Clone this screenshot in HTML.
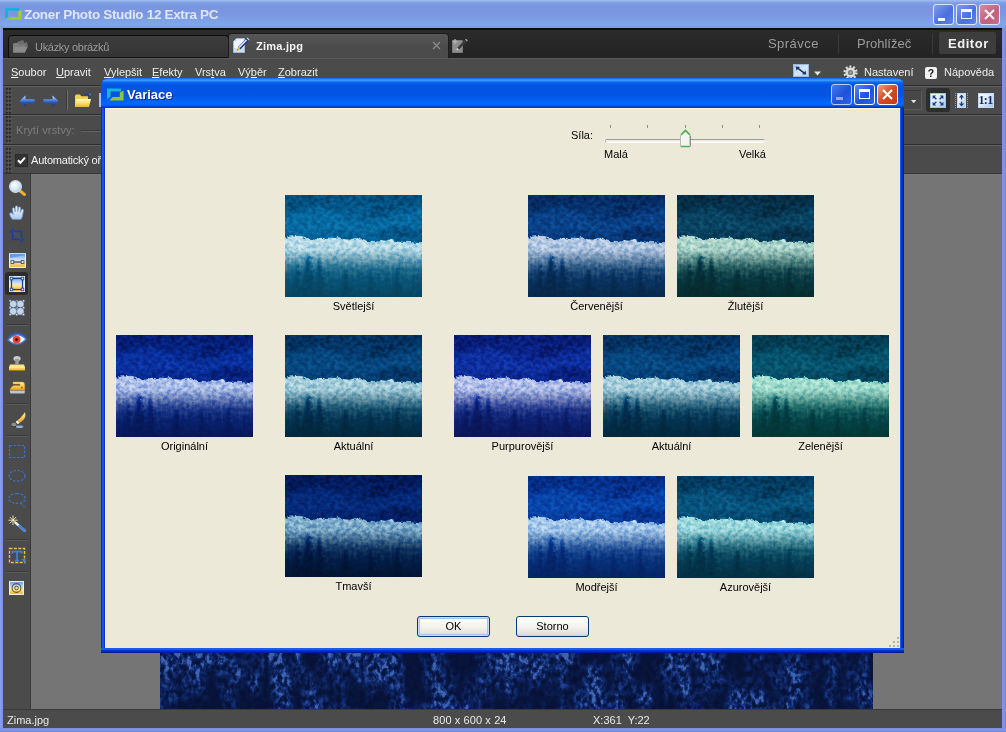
<!DOCTYPE html>
<html lang="cs"><head><meta charset="utf-8"><title>Zoner Photo Studio 12 Extra PC</title>
<style>
*{box-sizing:border-box;margin:0;padding:0}
html,body{width:1006px;height:732px;overflow:hidden}
body{position:relative;background:#7b92e2;font-family:"Liberation Sans",sans-serif;font-size:11px;color:#000;line-height:1}
.a{position:absolute}
.t{position:absolute;white-space:nowrap;line-height:13px;height:13px}
u{text-decoration:underline;text-underline-offset:1px}
/* main window */
#titlebar{left:0;top:0;width:1006px;height:28px;background:linear-gradient(#a0bbf2 0,#86a8ea 2px,#7a9ee4 3px,#7b96e0 6px,#7b96e0 14px,#7da2e8 21px,#7fa6ec 25px,#7b98ea 28px)}
#title{left:24px;top:7px;font-weight:bold;font-size:13.5px;line-height:16px;height:16px;color:#dde6fb;letter-spacing:-.33px}
.wb{position:absolute;top:4px;width:21px;height:21px;border-radius:3px;border:1px solid #dfe6fa}
#tabbar{left:3px;top:28px;width:999px;height:30px;background:linear-gradient(#0c0c0c 0,#0c0c0c 1.5px,#2b2b2b 2.5px,#232323 30px)}
.tab{position:absolute;top:6px;height:24px;border:1px solid #0c0c0c;border-bottom:none;border-radius:4px 4px 0 0}
#menubar{left:3px;top:58px;width:999px;height:28px;background:#4b4b4b;border-top:1px solid #585858}
.mi{position:absolute;top:66px;color:#ededed;white-space:nowrap;line-height:13px}
.tb{position:absolute;left:3px;width:999px;background:#4b4b4b;border-top:1px solid #2e2e2e;box-shadow:inset 0 1px 0 #606060}
.grip{position:absolute;left:6px}
#tools{left:3px;top:174px;width:28px;height:535px;background:#4b4b4b;border-right:1px solid #3a3a3a}
#canvas{left:31px;top:174px;width:971px;height:535px;background:#757575}
#status{left:3px;top:709px;width:999px;height:19px;background:#4b4b4b;border-top:1px solid #3a3a3a;color:#e6e6e6}
/* dialog */
#dlg{left:101px;top:78px;width:803px;height:575px;border-radius:8px 8px 0 0;background:#0a3ddc;overflow:hidden}
#dlgtitle{left:0;top:0;width:803px;height:30px;background:linear-gradient(#0a58dc 0,#2f86f8 1px,#3c96ff 2.5px,#0a6cf4 4px,#0358e6 6px,#0354e2 9px,#0355e3 17px,#0460f2 22px,#0468ff 26px,#0356ec 28px,#0038c8 29px,#0030b8 30px)}
#dlgbody{left:4px;top:30px;width:795px;height:540px;background:#ece9d8;border-top:1px solid #fbf6e6;border-left:1px solid #eef6fa}
.db{position:absolute;top:6px;width:21px;height:21px;border-radius:3px;border:1px solid #fff}
.lbl{position:absolute;width:137px;text-align:center;line-height:13px;height:13px;white-space:nowrap;color:#000}
.th{position:absolute;width:137px;height:102px;overflow:hidden}
.btn{position:absolute;top:616px;width:73px;height:21px;border:1px solid #003c74;border-radius:3px;background:linear-gradient(#fff 0,#f4f3ee 50%,#e6e4da 85%,#d6d0c5 100%);text-align:center;line-height:19px}
#root{position:absolute;left:0;top:0;width:1006px;height:732px;will-change:transform}

</style></head>
<body>
<div id="root">
<svg width="0" height="0" style="position:absolute;left:-10px;top:-10px" aria-hidden="true"><defs>

<linearGradient id="gTop" gradientUnits="userSpaceOnUse" x1="0" y1="0" x2="0" y2="44">
 <stop offset="0" stop-color="rgb(26,212,0)"/><stop offset=".5" stop-color="rgb(42,212,0)"/><stop offset="1" stop-color="rgb(46,212,0)"/>
</linearGradient>
<linearGradient id="gBand" gradientUnits="userSpaceOnUse" x1="0" y1="40" x2="0" y2="102">
 <stop offset="0" stop-color="rgb(196,225,0)"/>
 <stop offset=".14" stop-color="rgb(186,230,20)"/>
 <stop offset=".3" stop-color="rgb(174,235,90)"/>
 <stop offset=".48" stop-color="rgb(134,220,170)"/>
 <stop offset=".68" stop-color="rgb(74,190,200)"/>
 <stop offset="1" stop-color="rgb(42,160,190)"/>
</linearGradient>

<filter id="soft1" x="-30%" y="-10%" width="160%" height="120%"><feGaussianBlur stdDeviation="1.3"/></filter>
<filter id="soft" x="-10%" y="-20%" width="120%" height="140%"><feGaussianBlur stdDeviation="2.2"/></filter>
<symbol id="forest" viewBox="0 0 137 102" preserveAspectRatio="none" overflow="visible">
 <rect x="-10" y="-10" width="157" height="122" fill="url(#gTop)"/>
 <g filter="url(#soft)">
 <path d="M-10,-10 L66,-10 L50,8 L30,11 L12,17 L-10,19Z" fill="rgb(20,212,0)"/>
 <path d="M70,-10 L147,-10 L147,4 L116,10 L98,22 L84,21 L88,10Z" fill="rgb(22,212,0)"/>
 <path d="M-10,22 L20,15 L44,15 L62,23 L86,27 L108,22 L147,13 L147,33 L110,40 L80,39 L50,37 L20,41 L-10,40Z" fill="rgb(62,212,0)"/>
 <path d="M92,36 L114,31 L147,36 L147,50 L96,48Z" fill="rgb(26,212,0)"/>
 </g>
 <path d="M-10,44 Q-2,41.5 2,42.5 Q6,40 10,41.5 Q14,40 18,41.5 Q22,42.5 25,43.5 Q28,45 32,44 Q36,42 40,43.5 Q45,42 50,43 Q54,41.5 58,43.5 Q63,45 67,44 Q72,42.5 76,44.5 Q80,46 84,46 Q88,47.5 92,46.5 Q96,44.5 100,45.5 Q105,43.5 109,45.5 Q114,47.5 118,46.5 Q123,45 127,47 Q132,48.5 147,48 L147,115 L-10,115Z" fill="url(#gBand)"/>
 <g filter="url(#soft1)" fill="rgb(30,150,120)">
  <path d="M23,58 L28,80 L31,115 L15,115 L19,80Z"/>
  <path d="M34,62 L38,84 L41,115 L28,115 L31,84Z"/>
  <path d="M12,66 L15,88 L17,115 L6,115 L9,88Z"/>
  <path d="M60,72 L64,92 L66,115 L54,115 L57,92Z"/>
  <path d="M86,74 L90,94 L92,115 L80,115 L83,94Z"/>
  <path d="M112,70 L116,92 L118,115 L106,115 L109,92Z"/>
 </g>
</symbol>

<filter id="f-orig" x="0" y="0" width="100%" height="100%" color-interpolation-filters="sRGB">
 <feTurbulence type="fractalNoise" baseFrequency="0.22 0.26" numOctaves="3" seed="7" result="tn1"/>
 <feColorMatrix in="tn1" type="matrix" values="2.4 0 0 0 -0.7  2.4 0 0 0 -0.7  2.4 0 0 0 -0.7  0 0 0 0 1" result="n1"/>
 <feTurbulence type="fractalNoise" baseFrequency="0.42 0.04" numOctaves="2" seed="3" result="tn2"/>
 <feColorMatrix in="tn2" type="matrix" values="0 2.6 0 0 -0.8  0 2.6 0 0 -0.8  0 2.6 0 0 -0.8  0 0 0 0 1" result="n2"/>
 <feDisplacementMap in="SourceGraphic" in2="tn1" scale="5" xChannelSelector="R" yChannelSelector="G" result="src"/>
 <feColorMatrix in="src" type="matrix" values="1 0 0 0 0  1 0 0 0 0  1 0 0 0 0  0 0 0 0 1" result="sR"/>
 <feColorMatrix in="src" type="matrix" values="0 1 0 0 0  0 1 0 0 0  0 1 0 0 0  0 0 0 0 1" result="sG"/>
 <feColorMatrix in="src" type="matrix" values="0 0 1 0 0  0 0 1 0 0  0 0 1 0 0  0 0 0 0 1" result="sB"/>
 <feComposite in="sG" in2="n1" operator="arithmetic" k1="1" k2="0" k3="0" k4="0" result="t1"/>
 <feComposite in="sB" in2="n2" operator="arithmetic" k1="1" k2="0" k3="0" k4="0" result="t2"/>
 <feComposite in="sR" in2="t1" operator="arithmetic" k1="0" k2="1" k3="0.22" k4="0" result="s1"/>
 <feComposite in="s1" in2="t2" operator="arithmetic" k1="0" k2="1" k3="0.12" k4="0" result="s2"/>
 <feComponentTransfer in="s2">
  <feFuncR type="table" tableValues="0.008 0.020 0.047 0.259 0.620 0.910"/>
  <feFuncG type="table" tableValues="0.039 0.125 0.227 0.408 0.706 0.933"/>
  <feFuncB type="table" tableValues="0.220 0.486 0.690 0.800 0.894 0.980"/>
 </feComponentTransfer>
</filter>
<linearGradient id="gT-orig" gradientUnits="userSpaceOnUse" x1="0" y1="54" x2="0" y2="102"><stop offset="0" stop-color="rgb(7,22,76)" stop-opacity="0"/><stop offset=".4" stop-color="rgb(7,22,76)" stop-opacity=".5"/><stop offset="1" stop-color="rgb(7,22,76)" stop-opacity=".82"/></linearGradient>
<filter id="f-akt" x="0" y="0" width="100%" height="100%" color-interpolation-filters="sRGB">
 <feTurbulence type="fractalNoise" baseFrequency="0.22 0.26" numOctaves="3" seed="7" result="tn1"/>
 <feColorMatrix in="tn1" type="matrix" values="2.4 0 0 0 -0.7  2.4 0 0 0 -0.7  2.4 0 0 0 -0.7  0 0 0 0 1" result="n1"/>
 <feTurbulence type="fractalNoise" baseFrequency="0.42 0.04" numOctaves="2" seed="3" result="tn2"/>
 <feColorMatrix in="tn2" type="matrix" values="0 2.6 0 0 -0.8  0 2.6 0 0 -0.8  0 2.6 0 0 -0.8  0 0 0 0 1" result="n2"/>
 <feDisplacementMap in="SourceGraphic" in2="tn1" scale="5" xChannelSelector="R" yChannelSelector="G" result="src"/>
 <feColorMatrix in="src" type="matrix" values="1 0 0 0 0  1 0 0 0 0  1 0 0 0 0  0 0 0 0 1" result="sR"/>
 <feColorMatrix in="src" type="matrix" values="0 1 0 0 0  0 1 0 0 0  0 1 0 0 0  0 0 0 0 1" result="sG"/>
 <feColorMatrix in="src" type="matrix" values="0 0 1 0 0  0 0 1 0 0  0 0 1 0 0  0 0 0 0 1" result="sB"/>
 <feComposite in="sG" in2="n1" operator="arithmetic" k1="1" k2="0" k3="0" k4="0" result="t1"/>
 <feComposite in="sB" in2="n2" operator="arithmetic" k1="1" k2="0" k3="0" k4="0" result="t2"/>
 <feComposite in="sR" in2="t1" operator="arithmetic" k1="0" k2="1" k3="0.22" k4="0" result="s1"/>
 <feComposite in="s1" in2="t2" operator="arithmetic" k1="0" k2="1" k3="0.12" k4="0" result="s2"/>
 <feComponentTransfer in="s2">
  <feFuncR type="table" tableValues="0.008 0.016 0.031 0.227 0.588 0.886"/>
  <feFuncG type="table" tableValues="0.086 0.204 0.322 0.541 0.769 0.941"/>
  <feFuncB type="table" tableValues="0.173 0.400 0.557 0.690 0.831 0.949"/>
 </feComponentTransfer>
</filter>
<linearGradient id="gT-akt" gradientUnits="userSpaceOnUse" x1="0" y1="54" x2="0" y2="102"><stop offset="0" stop-color="rgb(3,36,50)" stop-opacity="0"/><stop offset=".4" stop-color="rgb(3,36,50)" stop-opacity=".5"/><stop offset="1" stop-color="rgb(3,36,50)" stop-opacity=".82"/></linearGradient>
<filter id="f-svet" x="0" y="0" width="100%" height="100%" color-interpolation-filters="sRGB">
 <feTurbulence type="fractalNoise" baseFrequency="0.22 0.26" numOctaves="3" seed="7" result="tn1"/>
 <feColorMatrix in="tn1" type="matrix" values="2.4 0 0 0 -0.7  2.4 0 0 0 -0.7  2.4 0 0 0 -0.7  0 0 0 0 1" result="n1"/>
 <feTurbulence type="fractalNoise" baseFrequency="0.42 0.04" numOctaves="2" seed="3" result="tn2"/>
 <feColorMatrix in="tn2" type="matrix" values="0 2.6 0 0 -0.8  0 2.6 0 0 -0.8  0 2.6 0 0 -0.8  0 0 0 0 1" result="n2"/>
 <feDisplacementMap in="SourceGraphic" in2="tn1" scale="5" xChannelSelector="R" yChannelSelector="G" result="src"/>
 <feColorMatrix in="src" type="matrix" values="1 0 0 0 0  1 0 0 0 0  1 0 0 0 0  0 0 0 0 1" result="sR"/>
 <feColorMatrix in="src" type="matrix" values="0 1 0 0 0  0 1 0 0 0  0 1 0 0 0  0 0 0 0 1" result="sG"/>
 <feColorMatrix in="src" type="matrix" values="0 0 1 0 0  0 0 1 0 0  0 0 1 0 0  0 0 0 0 1" result="sB"/>
 <feComposite in="sG" in2="n1" operator="arithmetic" k1="1" k2="0" k3="0" k4="0" result="t1"/>
 <feComposite in="sB" in2="n2" operator="arithmetic" k1="1" k2="0" k3="0" k4="0" result="t2"/>
 <feComposite in="sR" in2="t1" operator="arithmetic" k1="0" k2="1" k3="0.22" k4="0" result="s1"/>
 <feComposite in="s1" in2="t2" operator="arithmetic" k1="0" k2="1" k3="0.12" k4="0" result="s2"/>
 <feComponentTransfer in="s2">
  <feFuncR type="table" tableValues="0.008 0.012 0.031 0.275 0.667 0.925"/>
  <feFuncG type="table" tableValues="0.173 0.329 0.463 0.627 0.831 0.965"/>
  <feFuncB type="table" tableValues="0.282 0.525 0.690 0.784 0.886 0.965"/>
 </feComponentTransfer>
</filter>
<linearGradient id="gT-svet" gradientUnits="userSpaceOnUse" x1="0" y1="54" x2="0" y2="102"><stop offset="0" stop-color="rgb(8,64,86)" stop-opacity="0"/><stop offset=".4" stop-color="rgb(8,64,86)" stop-opacity=".5"/><stop offset="1" stop-color="rgb(8,64,86)" stop-opacity=".82"/></linearGradient>
<filter id="f-tmav" x="0" y="0" width="100%" height="100%" color-interpolation-filters="sRGB">
 <feTurbulence type="fractalNoise" baseFrequency="0.22 0.26" numOctaves="3" seed="7" result="tn1"/>
 <feColorMatrix in="tn1" type="matrix" values="2.4 0 0 0 -0.7  2.4 0 0 0 -0.7  2.4 0 0 0 -0.7  0 0 0 0 1" result="n1"/>
 <feTurbulence type="fractalNoise" baseFrequency="0.42 0.04" numOctaves="2" seed="3" result="tn2"/>
 <feColorMatrix in="tn2" type="matrix" values="0 2.6 0 0 -0.8  0 2.6 0 0 -0.8  0 2.6 0 0 -0.8  0 0 0 0 1" result="n2"/>
 <feDisplacementMap in="SourceGraphic" in2="tn1" scale="5" xChannelSelector="R" yChannelSelector="G" result="src"/>
 <feColorMatrix in="src" type="matrix" values="1 0 0 0 0  1 0 0 0 0  1 0 0 0 0  0 0 0 0 1" result="sR"/>
 <feColorMatrix in="src" type="matrix" values="0 1 0 0 0  0 1 0 0 0  0 1 0 0 0  0 0 0 0 1" result="sG"/>
 <feColorMatrix in="src" type="matrix" values="0 0 1 0 0  0 0 1 0 0  0 0 1 0 0  0 0 0 0 1" result="sB"/>
 <feComposite in="sG" in2="n1" operator="arithmetic" k1="1" k2="0" k3="0" k4="0" result="t1"/>
 <feComposite in="sB" in2="n2" operator="arithmetic" k1="1" k2="0" k3="0" k4="0" result="t2"/>
 <feComposite in="sR" in2="t1" operator="arithmetic" k1="0" k2="1" k3="0.22" k4="0" result="s1"/>
 <feComposite in="s1" in2="t2" operator="arithmetic" k1="0" k2="1" k3="0.12" k4="0" result="s2"/>
 <feComponentTransfer in="s2">
  <feFuncR type="table" tableValues="0.004 0.012 0.024 0.141 0.431 0.765"/>
  <feFuncG type="table" tableValues="0.039 0.110 0.196 0.361 0.627 0.871"/>
  <feFuncB type="table" tableValues="0.141 0.376 0.533 0.627 0.765 0.910"/>
 </feComponentTransfer>
</filter>
<linearGradient id="gT-tmav" gradientUnits="userSpaceOnUse" x1="0" y1="54" x2="0" y2="102"><stop offset="0" stop-color="rgb(2,18,36)" stop-opacity="0"/><stop offset=".4" stop-color="rgb(2,18,36)" stop-opacity=".5"/><stop offset="1" stop-color="rgb(2,18,36)" stop-opacity=".82"/></linearGradient>
<filter id="f-cerv" x="0" y="0" width="100%" height="100%" color-interpolation-filters="sRGB">
 <feTurbulence type="fractalNoise" baseFrequency="0.22 0.26" numOctaves="3" seed="7" result="tn1"/>
 <feColorMatrix in="tn1" type="matrix" values="2.4 0 0 0 -0.7  2.4 0 0 0 -0.7  2.4 0 0 0 -0.7  0 0 0 0 1" result="n1"/>
 <feTurbulence type="fractalNoise" baseFrequency="0.42 0.04" numOctaves="2" seed="3" result="tn2"/>
 <feColorMatrix in="tn2" type="matrix" values="0 2.6 0 0 -0.8  0 2.6 0 0 -0.8  0 2.6 0 0 -0.8  0 0 0 0 1" result="n2"/>
 <feDisplacementMap in="SourceGraphic" in2="tn1" scale="5" xChannelSelector="R" yChannelSelector="G" result="src"/>
 <feColorMatrix in="src" type="matrix" values="1 0 0 0 0  1 0 0 0 0  1 0 0 0 0  0 0 0 0 1" result="sR"/>
 <feColorMatrix in="src" type="matrix" values="0 1 0 0 0  0 1 0 0 0  0 1 0 0 0  0 0 0 0 1" result="sG"/>
 <feColorMatrix in="src" type="matrix" values="0 0 1 0 0  0 0 1 0 0  0 0 1 0 0  0 0 0 0 1" result="sB"/>
 <feComposite in="sG" in2="n1" operator="arithmetic" k1="1" k2="0" k3="0" k4="0" result="t1"/>
 <feComposite in="sB" in2="n2" operator="arithmetic" k1="1" k2="0" k3="0" k4="0" result="t2"/>
 <feComposite in="sR" in2="t1" operator="arithmetic" k1="0" k2="1" k3="0.22" k4="0" result="s1"/>
 <feComposite in="s1" in2="t2" operator="arithmetic" k1="0" k2="1" k3="0.12" k4="0" result="s2"/>
 <feComponentTransfer in="s2">
  <feFuncR type="table" tableValues="0.012 0.024 0.043 0.306 0.647 0.925"/>
  <feFuncG type="table" tableValues="0.086 0.184 0.298 0.525 0.745 0.933"/>
  <feFuncB type="table" tableValues="0.188 0.416 0.596 0.753 0.863 0.957"/>
 </feComponentTransfer>
</filter>
<linearGradient id="gT-cerv" gradientUnits="userSpaceOnUse" x1="0" y1="54" x2="0" y2="102"><stop offset="0" stop-color="rgb(8,38,66)" stop-opacity="0"/><stop offset=".4" stop-color="rgb(8,38,66)" stop-opacity=".5"/><stop offset="1" stop-color="rgb(8,38,66)" stop-opacity=".82"/></linearGradient>
<filter id="f-zlut" x="0" y="0" width="100%" height="100%" color-interpolation-filters="sRGB">
 <feTurbulence type="fractalNoise" baseFrequency="0.22 0.26" numOctaves="3" seed="7" result="tn1"/>
 <feColorMatrix in="tn1" type="matrix" values="2.4 0 0 0 -0.7  2.4 0 0 0 -0.7  2.4 0 0 0 -0.7  0 0 0 0 1" result="n1"/>
 <feTurbulence type="fractalNoise" baseFrequency="0.42 0.04" numOctaves="2" seed="3" result="tn2"/>
 <feColorMatrix in="tn2" type="matrix" values="0 2.6 0 0 -0.8  0 2.6 0 0 -0.8  0 2.6 0 0 -0.8  0 0 0 0 1" result="n2"/>
 <feDisplacementMap in="SourceGraphic" in2="tn1" scale="5" xChannelSelector="R" yChannelSelector="G" result="src"/>
 <feColorMatrix in="src" type="matrix" values="1 0 0 0 0  1 0 0 0 0  1 0 0 0 0  0 0 0 0 1" result="sR"/>
 <feColorMatrix in="src" type="matrix" values="0 1 0 0 0  0 1 0 0 0  0 1 0 0 0  0 0 0 0 1" result="sG"/>
 <feColorMatrix in="src" type="matrix" values="0 0 1 0 0  0 0 1 0 0  0 0 1 0 0  0 0 0 0 1" result="sB"/>
 <feComposite in="sG" in2="n1" operator="arithmetic" k1="1" k2="0" k3="0" k4="0" result="t1"/>
 <feComposite in="sB" in2="n2" operator="arithmetic" k1="1" k2="0" k3="0" k4="0" result="t2"/>
 <feComposite in="sR" in2="t1" operator="arithmetic" k1="0" k2="1" k3="0.22" k4="0" result="s1"/>
 <feComposite in="s1" in2="t2" operator="arithmetic" k1="0" k2="1" k3="0.12" k4="0" result="s2"/>
 <feComponentTransfer in="s2">
  <feFuncR type="table" tableValues="0.012 0.024 0.043 0.275 0.627 0.894"/>
  <feFuncG type="table" tableValues="0.094 0.192 0.306 0.549 0.804 0.957"/>
  <feFuncB type="table" tableValues="0.133 0.298 0.431 0.588 0.765 0.910"/>
 </feComponentTransfer>
</filter>
<linearGradient id="gT-zlut" gradientUnits="userSpaceOnUse" x1="0" y1="54" x2="0" y2="102"><stop offset="0" stop-color="rgb(6,42,38)" stop-opacity="0"/><stop offset=".4" stop-color="rgb(6,42,38)" stop-opacity=".5"/><stop offset="1" stop-color="rgb(6,42,38)" stop-opacity=".82"/></linearGradient>
<filter id="f-purp" x="0" y="0" width="100%" height="100%" color-interpolation-filters="sRGB">
 <feTurbulence type="fractalNoise" baseFrequency="0.22 0.26" numOctaves="3" seed="7" result="tn1"/>
 <feColorMatrix in="tn1" type="matrix" values="2.4 0 0 0 -0.7  2.4 0 0 0 -0.7  2.4 0 0 0 -0.7  0 0 0 0 1" result="n1"/>
 <feTurbulence type="fractalNoise" baseFrequency="0.42 0.04" numOctaves="2" seed="3" result="tn2"/>
 <feColorMatrix in="tn2" type="matrix" values="0 2.6 0 0 -0.8  0 2.6 0 0 -0.8  0 2.6 0 0 -0.8  0 0 0 0 1" result="n2"/>
 <feDisplacementMap in="SourceGraphic" in2="tn1" scale="5" xChannelSelector="R" yChannelSelector="G" result="src"/>
 <feColorMatrix in="src" type="matrix" values="1 0 0 0 0  1 0 0 0 0  1 0 0 0 0  0 0 0 0 1" result="sR"/>
 <feColorMatrix in="src" type="matrix" values="0 1 0 0 0  0 1 0 0 0  0 1 0 0 0  0 0 0 0 1" result="sG"/>
 <feColorMatrix in="src" type="matrix" values="0 0 1 0 0  0 0 1 0 0  0 0 1 0 0  0 0 0 0 1" result="sB"/>
 <feComposite in="sG" in2="n1" operator="arithmetic" k1="1" k2="0" k3="0" k4="0" result="t1"/>
 <feComposite in="sB" in2="n2" operator="arithmetic" k1="1" k2="0" k3="0" k4="0" result="t2"/>
 <feComposite in="sR" in2="t1" operator="arithmetic" k1="0" k2="1" k3="0.22" k4="0" result="s1"/>
 <feComposite in="s1" in2="t2" operator="arithmetic" k1="0" k2="1" k3="0.12" k4="0" result="s2"/>
 <feComponentTransfer in="s2">
  <feFuncR type="table" tableValues="0.016 0.031 0.067 0.290 0.643 0.925"/>
  <feFuncG type="table" tableValues="0.039 0.118 0.220 0.408 0.706 0.925"/>
  <feFuncB type="table" tableValues="0.220 0.486 0.698 0.808 0.894 0.980"/>
 </feComponentTransfer>
</filter>
<linearGradient id="gT-purp" gradientUnits="userSpaceOnUse" x1="0" y1="54" x2="0" y2="102"><stop offset="0" stop-color="rgb(11,20,78)" stop-opacity="0"/><stop offset=".4" stop-color="rgb(11,20,78)" stop-opacity=".5"/><stop offset="1" stop-color="rgb(11,20,78)" stop-opacity=".82"/></linearGradient>
<filter id="f-zel" x="0" y="0" width="100%" height="100%" color-interpolation-filters="sRGB">
 <feTurbulence type="fractalNoise" baseFrequency="0.22 0.26" numOctaves="3" seed="7" result="tn1"/>
 <feColorMatrix in="tn1" type="matrix" values="2.4 0 0 0 -0.7  2.4 0 0 0 -0.7  2.4 0 0 0 -0.7  0 0 0 0 1" result="n1"/>
 <feTurbulence type="fractalNoise" baseFrequency="0.42 0.04" numOctaves="2" seed="3" result="tn2"/>
 <feColorMatrix in="tn2" type="matrix" values="0 2.6 0 0 -0.8  0 2.6 0 0 -0.8  0 2.6 0 0 -0.8  0 0 0 0 1" result="n2"/>
 <feDisplacementMap in="SourceGraphic" in2="tn1" scale="5" xChannelSelector="R" yChannelSelector="G" result="src"/>
 <feColorMatrix in="src" type="matrix" values="1 0 0 0 0  1 0 0 0 0  1 0 0 0 0  0 0 0 0 1" result="sR"/>
 <feColorMatrix in="src" type="matrix" values="0 1 0 0 0  0 1 0 0 0  0 1 0 0 0  0 0 0 0 1" result="sG"/>
 <feColorMatrix in="src" type="matrix" values="0 0 1 0 0  0 0 1 0 0  0 0 1 0 0  0 0 0 0 1" result="sB"/>
 <feComposite in="sG" in2="n1" operator="arithmetic" k1="1" k2="0" k3="0" k4="0" result="t1"/>
 <feComposite in="sB" in2="n2" operator="arithmetic" k1="1" k2="0" k3="0" k4="0" result="t2"/>
 <feComposite in="sR" in2="t1" operator="arithmetic" k1="0" k2="1" k3="0.22" k4="0" result="s1"/>
 <feComposite in="s1" in2="t2" operator="arithmetic" k1="0" k2="1" k3="0.12" k4="0" result="s2"/>
 <feComponentTransfer in="s2">
  <feFuncR type="table" tableValues="0.008 0.016 0.031 0.235 0.588 0.843"/>
  <feFuncG type="table" tableValues="0.125 0.247 0.373 0.627 0.843 0.965"/>
  <feFuncB type="table" tableValues="0.149 0.341 0.482 0.627 0.784 0.910"/>
 </feComponentTransfer>
</filter>
<linearGradient id="gT-zel" gradientUnits="userSpaceOnUse" x1="0" y1="54" x2="0" y2="102"><stop offset="0" stop-color="rgb(3,52,44)" stop-opacity="0"/><stop offset=".4" stop-color="rgb(3,52,44)" stop-opacity=".5"/><stop offset="1" stop-color="rgb(3,52,44)" stop-opacity=".82"/></linearGradient>
<filter id="f-modr" x="0" y="0" width="100%" height="100%" color-interpolation-filters="sRGB">
 <feTurbulence type="fractalNoise" baseFrequency="0.22 0.26" numOctaves="3" seed="7" result="tn1"/>
 <feColorMatrix in="tn1" type="matrix" values="2.4 0 0 0 -0.7  2.4 0 0 0 -0.7  2.4 0 0 0 -0.7  0 0 0 0 1" result="n1"/>
 <feTurbulence type="fractalNoise" baseFrequency="0.42 0.04" numOctaves="2" seed="3" result="tn2"/>
 <feColorMatrix in="tn2" type="matrix" values="0 2.6 0 0 -0.8  0 2.6 0 0 -0.8  0 2.6 0 0 -0.8  0 0 0 0 1" result="n2"/>
 <feDisplacementMap in="SourceGraphic" in2="tn1" scale="5" xChannelSelector="R" yChannelSelector="G" result="src"/>
 <feColorMatrix in="src" type="matrix" values="1 0 0 0 0  1 0 0 0 0  1 0 0 0 0  0 0 0 0 1" result="sR"/>
 <feColorMatrix in="src" type="matrix" values="0 1 0 0 0  0 1 0 0 0  0 1 0 0 0  0 0 0 0 1" result="sG"/>
 <feColorMatrix in="src" type="matrix" values="0 0 1 0 0  0 0 1 0 0  0 0 1 0 0  0 0 0 0 1" result="sB"/>
 <feComposite in="sG" in2="n1" operator="arithmetic" k1="1" k2="0" k3="0" k4="0" result="t1"/>
 <feComposite in="sB" in2="n2" operator="arithmetic" k1="1" k2="0" k3="0" k4="0" result="t2"/>
 <feComposite in="sR" in2="t1" operator="arithmetic" k1="0" k2="1" k3="0.22" k4="0" result="s1"/>
 <feComposite in="s1" in2="t2" operator="arithmetic" k1="0" k2="1" k3="0.12" k4="0" result="s2"/>
 <feComponentTransfer in="s2">
  <feFuncR type="table" tableValues="0.008 0.020 0.039 0.243 0.588 0.886"/>
  <feFuncG type="table" tableValues="0.078 0.188 0.314 0.494 0.745 0.941"/>
  <feFuncB type="table" tableValues="0.275 0.557 0.722 0.824 0.902 0.973"/>
 </feComponentTransfer>
</filter>
<linearGradient id="gT-modr" gradientUnits="userSpaceOnUse" x1="0" y1="54" x2="0" y2="102"><stop offset="0" stop-color="rgb(6,32,88)" stop-opacity="0"/><stop offset=".4" stop-color="rgb(6,32,88)" stop-opacity=".5"/><stop offset="1" stop-color="rgb(6,32,88)" stop-opacity=".82"/></linearGradient>
<filter id="f-azur" x="0" y="0" width="100%" height="100%" color-interpolation-filters="sRGB">
 <feTurbulence type="fractalNoise" baseFrequency="0.22 0.26" numOctaves="3" seed="7" result="tn1"/>
 <feColorMatrix in="tn1" type="matrix" values="2.4 0 0 0 -0.7  2.4 0 0 0 -0.7  2.4 0 0 0 -0.7  0 0 0 0 1" result="n1"/>
 <feTurbulence type="fractalNoise" baseFrequency="0.42 0.04" numOctaves="2" seed="3" result="tn2"/>
 <feColorMatrix in="tn2" type="matrix" values="0 2.6 0 0 -0.8  0 2.6 0 0 -0.8  0 2.6 0 0 -0.8  0 0 0 0 1" result="n2"/>
 <feDisplacementMap in="SourceGraphic" in2="tn1" scale="5" xChannelSelector="R" yChannelSelector="G" result="src"/>
 <feColorMatrix in="src" type="matrix" values="1 0 0 0 0  1 0 0 0 0  1 0 0 0 0  0 0 0 0 1" result="sR"/>
 <feColorMatrix in="src" type="matrix" values="0 1 0 0 0  0 1 0 0 0  0 1 0 0 0  0 0 0 0 1" result="sG"/>
 <feColorMatrix in="src" type="matrix" values="0 0 1 0 0  0 0 1 0 0  0 0 1 0 0  0 0 0 0 1" result="sB"/>
 <feComposite in="sG" in2="n1" operator="arithmetic" k1="1" k2="0" k3="0" k4="0" result="t1"/>
 <feComposite in="sB" in2="n2" operator="arithmetic" k1="1" k2="0" k3="0" k4="0" result="t2"/>
 <feComposite in="sR" in2="t1" operator="arithmetic" k1="0" k2="1" k3="0.22" k4="0" result="s1"/>
 <feComposite in="s1" in2="t2" operator="arithmetic" k1="0" k2="1" k3="0.12" k4="0" result="s2"/>
 <feComponentTransfer in="s2">
  <feFuncR type="table" tableValues="0.008 0.016 0.035 0.220 0.549 0.843"/>
  <feFuncG type="table" tableValues="0.110 0.243 0.369 0.588 0.816 0.961"/>
  <feFuncB type="table" tableValues="0.196 0.392 0.541 0.686 0.839 0.949"/>
 </feComponentTransfer>
</filter>
<linearGradient id="gT-azur" gradientUnits="userSpaceOnUse" x1="0" y1="54" x2="0" y2="102"><stop offset="0" stop-color="rgb(3,44,58)" stop-opacity="0"/><stop offset=".4" stop-color="rgb(3,44,58)" stop-opacity=".5"/><stop offset="1" stop-color="rgb(3,44,58)" stop-opacity=".82"/></linearGradient>

<symbol id="bigforest" viewBox="0 0 713 68" preserveAspectRatio="none">
 <rect width="713" height="68" fill="rgb(20,235,0)"/>
</symbol>
<filter id="f-bigp" x="0" y="0" width="100%" height="100%" color-interpolation-filters="sRGB">
 <feTurbulence type="fractalNoise" baseFrequency="0.045 0.022" numOctaves="2" seed="5" result="ta"/>
 <feColorMatrix in="ta" type="matrix" values="3.2 0 0 0 -1.1  3.2 0 0 0 -1.1  3.2 0 0 0 -1.1  0 0 0 0 1" result="na"/>
 <feTurbulence type="fractalNoise" baseFrequency="0.22 0.16" numOctaves="3" seed="11" result="tb"/>
 <feColorMatrix in="tb" type="matrix" values="0 2.6 0 0 -0.85  0 2.6 0 0 -0.85  0 2.6 0 0 -0.85  0 0 0 0 1" result="nb"/>
 <feComposite in="na" in2="nb" operator="arithmetic" k1="0.9" k2="0.06" k3="0.1" k4="0.07" result="n1"/>
 <feComponentTransfer in="n1">
  <feFuncR type="table" tableValues="0.024 0.035 0.047 0.071 0.125 0.251"/>
  <feFuncG type="table" tableValues="0.059 0.090 0.125 0.180 0.259 0.392"/>
  <feFuncB type="table" tableValues="0.180 0.259 0.345 0.447 0.557 0.690"/>
 </feComponentTransfer>
</filter>
</defs></svg>
<!-- ===== main window frame ===== -->
<div class="a" id="titlebar"></div>
<svg class="a" style="left:5px;top:8px" width="17" height="12" viewBox="0 0 17 12">
 <defs><linearGradient id="zl1" x1="0" y1="0" x2="1" y2="1"><stop offset="0" stop-color="#0cbcd8"/><stop offset="1" stop-color="#2a9adc"/></linearGradient>
 <linearGradient id="zl2" x1="0" y1="1" x2="1" y2="0"><stop offset="0" stop-color="#86cc2a"/><stop offset="1" stop-color="#a4d420"/></linearGradient></defs>
 <path d="M0,0 H14 V2.8 H3 V8.4 L0,11Z" fill="url(#zl1)"/>
 <path d="M16.6,2.2 V12 H2 L5,9 H13.2 V3.6Z" fill="url(#zl2)"/>
</svg>
<div class="t" id="title">Zoner Photo Studio 12 Extra PC</div>
<!-- window buttons -->
<div class="wb" style="left:933px;background:linear-gradient(135deg,#7f9cf0,#4a6fdc 60%,#5f86ea)"><div class="a" style="left:4px;top:13px;width:7px;height:3px;background:#f4f6fd"></div></div>
<div class="wb" style="left:956px;background:linear-gradient(135deg,#7f9cf0,#4a6fdc 60%,#5f86ea)"><div class="a" style="left:4px;top:4px;width:11px;height:10px;border:1px solid #f4f6fd;border-top-width:3px"></div></div>
<div class="wb" style="left:979px;background:linear-gradient(135deg,#d98aa0,#c0607c 60%,#c8708a)">
 <svg class="a" style="left:3px;top:3px" width="13" height="13" viewBox="0 0 13 13"><path d="M2,2 L11,11 M11,2 L2,11" stroke="#f8f2f6" stroke-width="2.1" stroke-linecap="butt"/></svg></div>

<!-- ===== tab bar ===== -->
<div class="a" id="tabbar">
 <div class="tab" style="left:5px;top:7px;height:23px;width:221px;background:linear-gradient(#3c3c3c,#343434);border-bottom:1px solid #111"></div>
 <div class="tab" style="left:225px;top:5px;height:25px;width:221px;background:linear-gradient(#565656,#4b4b4b 60%);border-color:#1c1c1c"></div>
 <div class="a" style="left:835px;top:6px;width:1px;height:20px;background:#3a3a3a"></div>
 <div class="a" style="left:929px;top:6px;width:1px;height:20px;background:#3a3a3a"></div>
 <div class="a" style="left:936px;top:4px;width:57px;height:22px;background:#3d3d3d;border-radius:2px"></div>
</div>
<!-- tab 1 icon: folder -->
<svg class="a" style="left:12px;top:39px" width="18" height="15" viewBox="0 0 18 15">
 <path d="M5,3 L11,1 L12.5,4 L15,3 L16,8 L8,9Z" fill="#6d6d6d"/>
 <path d="M1,5 L2,4 L6,4 L7,5.5 L13,5.5 L13,13.5 L1,13.5Z" fill="#7c7c7c"/>
 <path d="M3,8 L15.5,8 L13,13.5 L1,13.5Z" fill="#8a8a8a"/>
</svg>
<div class="t" style="left:35px;top:41px;color:#9a9a9a;font-size:11px;letter-spacing:-.3px">Ukázky obrázků</div>
<!-- tab 2 icon: page with pencil -->
<svg class="a" style="left:232px;top:37px" width="18" height="17" viewBox="0 0 18 17">
 <path d="M4.5,1.5 L12.5,1.5 L12.5,15.5 L1.5,15.5 L1.5,4.5Z" fill="#eef4fc" stroke="#9fb8dc" stroke-width="1"/>
 <path d="M1.5,4.5 L4.5,4.5 L4.5,1.5Z" fill="#c4d6ee"/>
 <path d="M2,11 h10 v4 h-10z" fill="#cfe0f6"/>
 <path d="M14.6,1.2 L17,3.6 L8.4,12.4 L6,10Z" fill="#1b3c90"/>
 <path d="M14,2.4 L15,3.4 L7.6,11 L6.6,10Z" fill="#e8f0ff"/>
 <path d="M15.4,0.6 L17.6,2.8 L17,3.6 L14.6,1.2Z" fill="#d8d8d8"/>
 <path d="M6,10 L8.4,12.4 L5,13.6Z" fill="#f4c430"/>
 <path d="M5,13.6 L5.5,12.2 L6.3,13.1Z" fill="#3a2a10"/>
</svg>
<div class="t" style="left:256px;top:40px;color:#f4f4f4;font-weight:bold;font-size:11px;letter-spacing:.25px">Zima.jpg</div>
<svg class="a" style="left:432px;top:41px" width="9" height="9" viewBox="0 0 9 9"><path d="M1,1 L8,8 M8,1 L1,8" stroke="#8c8c8c" stroke-width="1.3"/></svg>
<!-- new tab icon -->
<svg class="a" style="left:451px;top:37px" width="18" height="17" viewBox="0 0 18 17">
 <path d="M1.5,3.5 L11.5,3.5 L11.5,15.5 L1.5,15.5Z" fill="#8e8e8e" stroke="#7a7a7a" stroke-width="1"/>
 <path d="M4,2 V7 M1.6,4.5 H6.4" stroke="#b4b4b4" stroke-width="1.3"/>
 <path d="M14.2,2.6 L16,4.4 L8,12.6 L6.2,10.8Z" fill="#3a3a3a"/>
 <path d="M14.2,2.6 L15,1.8 L16.8,3.6 L16,4.4Z" fill="#b8b8b8"/>
 <path d="M6.2,10.8 L8,12.6 L5.2,13.6Z" fill="#cfcfcf"/>
</svg>
<div class="t" style="left:768px;top:36px;font-size:13px;line-height:16px;height:16px;color:#9c9c9c;letter-spacing:.45px">Správce</div>
<div class="t" style="left:857px;top:36px;font-size:13px;line-height:16px;height:16px;color:#9c9c9c">Prohlížeč</div>
<div class="t" style="left:948px;top:36px;font-size:13px;line-height:16px;height:16px;color:#f2f2f2;font-weight:bold;letter-spacing:.55px">Editor</div>

<!-- ===== menu bar ===== -->
<div class="a" id="menubar"></div>
<div class="mi" style="left:11px"><u>S</u>oubor</div>
<div class="mi" style="left:56px"><u>U</u>pravit</div>
<div class="mi" style="left:104px"><u>V</u>ylepšit</div>
<div class="mi" style="left:152px"><u>E</u>fekty</div>
<div class="mi" style="left:195px">Vrs<u>t</u>va</div>
<div class="mi" style="left:238px">Vý<u>b</u>ěr</div>
<div class="mi" style="left:278px"><u>Z</u>obrazit</div>
<!-- right side of menubar -->
<svg class="a" style="left:793px;top:64px" width="30" height="14" viewBox="0 0 30 14">
 <defs><linearGradient id="mi1" x1="0" y1="0" x2="1" y2="1"><stop offset="0" stop-color="#a9c8ec"/><stop offset=".5" stop-color="#d4e6f8"/><stop offset="1" stop-color="#b4d0f0"/></linearGradient></defs>
 <rect x=".5" y=".5" width="15" height="12" fill="url(#mi1)" stroke="#9ab8dc"/>
 <path d="M4,3.6 L12,9.6" stroke="#15356e" stroke-width="1.5"/>
 <path d="M2.8,2.6 L7,3 L3.4,6.4Z M13.2,10.6 L9,10.2 L12.6,6.8Z" fill="#15356e"/>
 <path d="M21,7.4 l7,0 l-3.5,4.2z" fill="#e4e4e4"/>
</svg>
<svg class="a" style="left:843px;top:65px" width="15" height="15" viewBox="0 0 15 15">
 <circle cx="7.5" cy="7.5" r="5.9" fill="none" stroke="#dcdcdc" stroke-width="2.4" stroke-dasharray="1.9 1.81"/>
 <circle cx="7.5" cy="7.5" r="5" fill="#dcdcdc"/>
 <circle cx="7.5" cy="7.5" r="2.6" fill="#777"/><circle cx="7.5" cy="7.5" r="1.3" fill="#a2a2a2"/>
</svg>
<div class="mi" style="left:864px">Nastavení</div>
<div class="a" style="left:925px;top:67px;width:12px;height:12px;background:#f2f2f2;border-radius:2px;color:#1a1a1a;font-weight:bold;font-size:10.5px;line-height:12px;text-align:center">?</div>
<div class="mi" style="left:944px">Nápověda</div>

<!-- ===== toolbars ===== -->
<div class="tb" style="top:85px;height:29px"></div>
<div class="tb" style="top:114px;height:30px"></div>
<div class="tb" style="top:144px;height:30px;border-bottom:1px solid #383838"></div>
<svg class="grip" style="top:88px" width="6" height="86" viewBox="0 0 6 86">
 <defs><pattern id="gp" width="3" height="4" patternUnits="userSpaceOnUse"><rect width="2" height="2" fill="#2a2a2a"/><rect x="1" y="1" width="1" height="1" fill="#3c3c3c"/><rect x="2" y="2" width="1" height="1" fill="#666" opacity=".8"/></pattern></defs>
 <rect x="0" y="0" width="6" height="26" fill="url(#gp)"/>
 <rect x="0" y="28" width="6" height="28" fill="url(#gp)"/>
 <rect x="0" y="60" width="6" height="26" fill="url(#gp)"/>
</svg>
<!-- toolbar 1 icons -->
<svg class="a" style="left:19px;top:94px" width="16" height="14" viewBox="0 0 16 14"><defs><linearGradient id="ar" x1="0" y1="0" x2="0" y2="1"><stop offset="0" stop-color="#d4e6ff"/><stop offset=".32" stop-color="#6a9cf0"/><stop offset=".6" stop-color="#2a5ccc"/><stop offset="1" stop-color="#0c2890"/></linearGradient></defs>
 <path d="M0.5,7 L6.5,1.5 L6.5,5.2 L15.5,5.2 L15.5,8.8 L6.5,8.8 L6.5,12.5Z" fill="url(#ar)"/></svg>
<svg class="a" style="left:43px;top:94px" width="16" height="14" viewBox="0 0 16 14">
 <path d="M15.5,7 L9.5,1.5 L9.5,5.2 L0.5,5.2 L0.5,8.8 L9.5,8.8 L9.5,12.5Z" fill="url(#ar)"/></svg>
<div class="a" style="left:66px;top:90px;width:1px;height:20px;background:#3c3c3c;box-shadow:1px 0 0 #6c6c6c"></div>
<svg class="a" style="left:74px;top:92px" width="18" height="16" viewBox="0 0 18 16"><defs><linearGradient id="fo" x1="0" y1="0" x2="0" y2="1"><stop offset="0" stop-color="#fffbc0"/><stop offset=".5" stop-color="#fbe070"/><stop offset="1" stop-color="#f0b418"/></linearGradient></defs>
 <path d="M9.5,3.4 Q12,0.6 15.4,2 L16.4,0.6 L17,4.6 L13.2,4.2 L14.4,3.2 Q12.2,2.2 10.6,4Z" fill="#1d3f9c"/>
 <path d="M15.2,2.2 L16.2,1.2 L16.6,3.8Z" fill="#9fc0f4"/>
 <path d="M1,4 L2,2.6 L6,2.6 L7.2,4.2 L14,4.2 L14,15 L1,15Z" fill="#f6d050"/>
 <path d="M2.4,7 L17,7 L15,15 L1,15Z" fill="url(#fo)"/>
</svg>
<div class="a" style="left:99px;top:93px;width:3px;height:14px;background:#a4bff0"></div>
<!-- toolbar 1 right -->
<div class="a" style="left:903px;top:90px;width:19px;height:20px;background:#474747;border:1px solid #3a3a3a;border-right-color:#5c5c5c;border-bottom-color:#5c5c5c"></div>
<svg class="a" style="left:911px;top:100px" width="6" height="4" viewBox="0 0 6 4"><path d="M0,0 L5.4,0 L2.7,3.2z" fill="#e4e4e4"/></svg>
<div class="a" style="left:926px;top:88px;width:24px;height:24px;background:#2e2e2e;border-radius:3px"></div>
<svg class="a" style="left:930px;top:93px" width="16" height="15" viewBox="0 0 16 15">
 <defs><linearGradient id="icb" x1="0" y1="0" x2="1" y2="1"><stop offset="0" stop-color="#ffffff"/><stop offset=".5" stop-color="#dbe8f8"/><stop offset="1" stop-color="#a9c6ee"/></linearGradient></defs>
 <rect x=".5" y=".5" width="15" height="14" fill="url(#icb)" stroke="#9fc0ee"/>
 <g fill="#173d84"><path d="M2.6,2.6 h3.6 l-3.6,3.6z"/><path d="M13.4,2.6 h-3.6 l3.6,3.6z"/><path d="M2.6,12.4 h3.6 l-3.6,-3.6z"/><path d="M13.4,12.4 h-3.6 l3.6,-3.6z"/></g>
 <g stroke="#173d84" stroke-width="1.3"><path d="M3.8,3.8 L6.4,6.3 M12.2,3.8 L9.6,6.3 M3.8,11.2 L6.4,8.7 M12.2,11.2 L9.6,8.7"/></g>
</svg>
<svg class="a" style="left:954px;top:93px" width="15" height="15" viewBox="0 0 15 15">
 <rect x="3.5" y=".5" width="8" height="14" fill="url(#icb)" stroke="#c4d8f2" stroke-width="1"/>
 <path d="M1.5,0 V15 M13.5,0 V15" stroke="#7fa0d0" stroke-width="1" stroke-dasharray="1 1"/>
 <path d="M7.5,2.6 V6.6 M7.5,8.6 V12.4" stroke="#173d84" stroke-width="1.2"/>
 <path d="M7.5,1.6 l2.6,3 h-5.2z M7.5,13.4 l2.6,-3 h-5.2z" fill="#173d84"/>
</svg>
<div class="a" style="left:978px;top:93px;width:16px;height:15px;background:linear-gradient(135deg,#fff,#dbe8f8 50%,#a9c6ee);border:1px solid #c4d8f2;color:#10295f;font-family:'Liberation Serif',serif;font-weight:bold;font-size:12px;line-height:13px;text-align:center;letter-spacing:-.6px;text-indent:-1px">1:1</div>
<!-- toolbar 2 -->
<div class="t" style="left:16px;top:124px;color:#7c7c7c;letter-spacing:.1px">Krytí vrstvy:</div>
<div class="a" style="left:81px;top:130px;width:24px;height:2px;background:#3a3a3a;border-bottom:1px solid #646464"></div>
<!-- toolbar 3 -->
<div class="a" style="left:15px;top:154px;width:13px;height:13px;background:#343434;border:1px solid #2a2a2a"></div>
<svg class="a" style="left:17px;top:156px" width="9" height="9" viewBox="0 0 9 9"><path d="M1,4.2 L3.4,6.8 L8,1.6" stroke="#fff" stroke-width="2" fill="none"/></svg>
<div class="t" style="left:31px;top:154px;color:#f2f2f2;letter-spacing:-.2px">Automatický oř</div>

<!-- ===== left tool panel + canvas ===== -->
<div class="a" id="tools"></div>
<div class="a" id="canvas"></div>
<!-- photo (visible strip below dialog) -->
<svg class="a" style="left:160px;top:640px" width="713" height="69" viewBox="0 0 713 69"><use href="#bigforest" width="713" height="69" filter="url(#f-bigp)"/></svg>

<!-- ===== left tool icons ===== -->
<svg class="a" style="left:3px;top:174px" width="28" height="440" viewBox="3 174 28 440">
 <defs>
  <radialGradient id="lens" cx=".4" cy=".35" r=".7"><stop offset="0" stop-color="#ffffff"/><stop offset=".6" stop-color="#d6e8f8"/><stop offset="1" stop-color="#9cc0e6"/></radialGradient>
  <linearGradient id="skyy" x1="0" y1="0" x2="0" y2="1"><stop offset="0" stop-color="#5f9de6"/><stop offset=".45" stop-color="#cfe0f4"/><stop offset=".55" stop-color="#fbe9a8"/><stop offset="1" stop-color="#f0b828"/></linearGradient>
  <linearGradient id="yel" x1="0" y1="0" x2="0" y2="1"><stop offset="0" stop-color="#fff2a0"/><stop offset="1" stop-color="#e8a810"/></linearGradient>
  <linearGradient id="hand" x1="0" y1="0" x2="0" y2="1"><stop offset="0" stop-color="#ffffff"/><stop offset="1" stop-color="#a8c8ee"/></linearGradient>
 </defs>
 <!-- magnifier -->
 <path d="M19,190 L24.5,194.5" stroke="#e8b030" stroke-width="3" stroke-linecap="round"/>
 <circle cx="15.5" cy="186.5" r="5.8" fill="url(#lens)" stroke="#cfd8e4" stroke-width="1.4"/>
 <!-- hand -->
 <path d="M12.5,219 C10.5,216 9.5,214 10.5,213 C11.5,212.4 12.5,213.5 13.2,214.5 L12.6,209 C12.6,207.8 14.2,207.8 14.4,209 L14.9,212 L15.1,207.3 C15.2,206 16.9,206 17,207.3 L17.2,212 L17.9,208 C18.1,206.8 19.7,207 19.6,208.3 L19.4,212.6 L20.5,210 C21,209 22.4,209.4 22.2,210.6 L21.3,216 C21,217.6 20.5,218.3 19.8,219Z" fill="url(#hand)" stroke="#7aa4d8" stroke-width=".7" transform="translate(16.5 213) scale(1.13 1.05) translate(-16.1 -213)"/>
 <!-- crop -->
 <path d="M12.5,228.5 V239.5 H24.5 M9.5,231.5 H21.5 V242.5" stroke="#1b3f9a" stroke-width="1.6" fill="none"/>
 <path d="M12.5,231.5 L21.5,239.5" stroke="#3a5fb8" stroke-width=".6"/>
 <!-- horizon -->
 <path d="M9.5,253.5 H25.5 V267.5 H9.5Z" fill="url(#skyy)" stroke="#e8eef6" stroke-width="1"/>
 <path d="M10,258 L25,255 L25,253.8 L10,253.8Z" fill="#5f9de6"/>
 <path d="M12,262 H23" stroke="#1b3f9a" stroke-width="1.2"/>
 <rect x="11" y="260.6" width="2.8" height="2.8" fill="#dfe9f8" stroke="#1b3f9a" stroke-width=".8"/><rect x="21.2" y="260.6" width="2.8" height="2.8" fill="#dfe9f8" stroke="#1b3f9a" stroke-width=".8"/>
 <!-- selected: perspective/transform -->
 <rect x="5" y="272" width="23" height="23" rx="3" fill="#2c2c2c"/>
 <rect x="9.5" y="276.5" width="15" height="15" fill="url(#skyy)" stroke="#e8eef6" stroke-width="1"/>
 <rect x="11.5" y="278.5" width="11" height="11" fill="none" stroke="#1b3f9a" stroke-width="1.2"/>
 <g fill="#e4ecf8" stroke="#1b3f9a" stroke-width=".8"><rect x="10.2" y="277.2" width="2.6" height="2.6"/><rect x="21.2" y="277.2" width="2.6" height="2.6"/><rect x="10.2" y="288.2" width="2.6" height="2.6"/><rect x="21.2" y="288.2" width="2.6" height="2.6"/></g>
 <!-- grid of dots -->
 <g fill="#c4d6ec" stroke="#9ab4d4" stroke-width=".5"><circle cx="13.2" cy="304" r="3.3"/><circle cx="20.4" cy="304" r="3.3"/><circle cx="13.2" cy="311.4" r="3.3"/><circle cx="20.4" cy="311.4" r="3.3"/></g>
 <g fill="#f4f8fc" stroke="#56749c" stroke-width=".5"><rect x="9.2" y="300" width="1.8" height="1.8"/><rect x="15.9" y="300" width="1.8" height="1.8"/><rect x="22.6" y="300" width="1.8" height="1.8"/><rect x="9.2" y="306.8" width="1.8" height="1.8"/><rect x="15.9" y="306.8" width="1.8" height="1.8"/><rect x="22.6" y="306.8" width="1.8" height="1.8"/><rect x="9.2" y="313.6" width="1.8" height="1.8"/><rect x="15.9" y="313.6" width="1.8" height="1.8"/><rect x="22.6" y="313.6" width="1.8" height="1.8"/></g>
 <!-- separators -->
 <g stroke="#3a3a3a" stroke-width="1"><path d="M6,324.5 H27 M6,403.5 H27 M6,435.5 H27 M6,539.5 H27 M6,571.5 H27"/></g>
 <g stroke="#5c5c5c" stroke-width="1"><path d="M6,325.5 H27 M6,404.5 H27 M6,436.5 H27 M6,540.5 H27 M6,572.5 H27"/></g>
 <!-- eye -->
 <path d="M8,340 Q17,330 26,339 Q18,348.5 8,340Z" fill="#f4f6fb" stroke="#4a7cd8" stroke-width="1.3"/>
 <circle cx="16.6" cy="339.6" r="3.9" fill="#e04a30"/><circle cx="16.6" cy="339.6" r="1.6" fill="#5a1208"/>
 <path d="M8.5,337 Q17,329.5 25.5,336.5" stroke="#2d5fc0" stroke-width="1.4" fill="none"/>
 <!-- stamp -->
 <ellipse cx="17" cy="358.5" rx="3.6" ry="2.6" fill="#c9c9c9"/><rect x="15.2" y="359" width="3.6" height="5" fill="#9a9a9a"/>
 <path d="M10,364.5 H24 L25,367.5 H9Z" fill="#fbe68a"/><rect x="9" y="367" width="16" height="3.6" fill="url(#yel)"/><rect x="9" y="370" width="16" height="1" fill="#a87808"/>
 <!-- iron -->
 <path d="M13,382 H22.5 C24.5,382 24.8,384 24.8,386 V390 H10 Q11,386 14,385.4 H20 V384 H13Z" fill="url(#yel)" stroke="#c08a10" stroke-width=".5"/>
 <circle cx="21.8" cy="387.6" r=".9" fill="#d03020"/>
 <path d="M9.5,390.5 H25 L24.5,393.5 H10.5Z" fill="#b8c6d8"/>
 <!-- brush -->
 <path d="M24.8,412.2 C26.6,416 24.6,420 19.6,422.8 L17.2,420.6 C20.5,418 23,415.2 24.8,412.2Z" fill="url(#yel)"/>
 <path d="M17.2,420.6 L19.6,422.8 L17.9,424.2 L15.7,422.1Z" fill="#fbfbfb"/>
 <ellipse cx="13.9" cy="424.9" rx="2.6" ry="2.1" fill="#8c8c8c"/>
 <path d="M11.4,426 Q13.5,427.8 16,426.4" stroke="#2e2e2e" stroke-width="1" fill="none"/>
 <ellipse cx="19.6" cy="426.7" rx="3.7" ry="1.3" fill="#8fb4e0"/>
 <!-- dashed rect -->
 <rect x="9.5" y="445.5" width="15" height="12" fill="none" stroke="#3a74d8" stroke-width="1.15" stroke-dasharray="2.4 1.6"/>
 <!-- dashed ellipse -->
 <ellipse cx="17" cy="475.8" rx="8" ry="5.4" fill="none" stroke="#3a74d8" stroke-width="1.15" stroke-dasharray="2.4 1.6"/>
 <!-- lasso -->
 <path d="M17,493.6 C22.5,493.6 25.5,496 25.3,498.8 C25,501.6 21.5,503.4 17.5,503.4 C12.5,503.4 8.6,501.4 8.7,498.4 C8.8,495.6 12.4,493.6 17,493.6Z M20.5,503 L24.6,507" fill="none" stroke="#3a74d8" stroke-width="1.15" stroke-dasharray="2.4 1.6"/>
 <!-- wand -->
 <path d="M15.4,522.6 L24.6,530.6" stroke="#e8f0fb" stroke-width="2.4" stroke-linecap="round"/>
 <path d="M19.4,526 L24.6,530.6" stroke="#3f7fe0" stroke-width="2.4" stroke-linecap="round"/>
 <path d="M13,515.4 V525 M8.4,520.2 H17.6 M9.8,517 L16.2,523.4 M16.2,517 L9.8,523.4" stroke="#f4e9b8" stroke-width=".9"/>
 <!-- text tool -->
 <rect x="9.5" y="548.5" width="15" height="14" fill="none" stroke="#f0c030" stroke-width="1.4" stroke-dasharray="3 1.4"/>
 <path d="M12.4,553.4 V551.6 H21.6 V553.4 M17,551.6 V560.4 M15,560.6 H19" stroke="#3f7fe0" stroke-width="1.7" fill="none"/>
 <path d="M21,559 L25.6,559 L25.6,563.4Z" fill="#3f7fe0"/>
 <!-- target icon -->
 <rect x="9.5" y="581.5" width="14" height="13" fill="url(#skyy)" stroke="#e8eef6" stroke-width="1"/>
 <circle cx="16.5" cy="588" r="4.4" fill="none" stroke="#6a5a2a" stroke-width="1.1"/><circle cx="16.5" cy="588" r="1.8" fill="none" stroke="#6a5a2a" stroke-width="1"/>
</svg>


<!-- ===== status bar ===== -->
<div class="a" id="status"></div>
<div class="t" style="left:7px;top:714px;color:#e8e8e8">Zima.jpg</div>
<div class="t" style="left:433px;top:714px;color:#e8e8e8;letter-spacing:.1px">800 x 600 x 24</div>
<div class="t" style="left:593px;top:714px;color:#e8e8e8">X:361&nbsp; Y:22</div>
<!-- outer frame borders -->
<div class="a" style="left:0;top:28px;width:3px;height:704px;background:linear-gradient(90deg,#8aa0ea,#7b90e0)"></div>
<div class="a" style="left:1002px;top:28px;width:4px;height:704px;background:linear-gradient(90deg,#7b90e0,#8396e2 50%,#6f84d8)"></div>
<div class="a" style="left:0;top:728px;width:1006px;height:4px;background:linear-gradient(#7b90e0,#8396e2 50%,#6f84d8)"></div>
<!-- ===== Variace dialog ===== -->
<div class="a" id="dlg">
 <div class="a" id="dlgtitle"></div>
 <div class="a" style="left:0;top:30px;width:4px;height:545px;background:linear-gradient(90deg,#0a28c8 0,#0a2cca 1px,#1a52e2 1.5px,#1a52e2 2.8px,#0a30c8 3.2px)"></div>
 <div class="a" style="left:799px;top:30px;width:4px;height:545px;background:linear-gradient(90deg,#1a5ee8 0,#1a5ee8 1px,#0034d2 1px,#002cc4 3px,#001aa4 3px)"></div>
 <div class="a" style="left:0;top:570px;width:803px;height:5px;background:linear-gradient(#1a5ee8 0,#1a58e6 1.5px,#0034d2 2px,#002cc4 3.5px,#001aa4 4px)"></div>
 <div class="a" id="dlgbody"></div>
 <svg class="a" style="left:6px;top:10px" width="17" height="13" viewBox="0 0 17 13">
  <path d="M0,0.4 H14 V3.6 H3.6 V8.4 L0,11.2Z" fill="#1fb2d6"/>
  <path d="M16.6,2.4 V12.4 H2.4 L5.8,9 H12.8 V4.4Z" fill="#8cc63a"/>
 </svg>
 <div class="t" style="left:26px;top:9px;color:#fff;font-weight:bold;font-size:13px;line-height:16px;height:16px;text-shadow:1px 1px 0 #0a2a90">Variace</div>
 <div class="db" style="left:730px;background:linear-gradient(135deg,#4a7af0,#1e52d8 55%,#2c64e8);border-color:#b8ccf8"><div class="a" style="left:4px;top:12px;width:7px;height:3px;background:#8fa8ee"></div></div>
 <div class="db" style="left:753px;background:linear-gradient(135deg,#5a8af8,#1e52d8 55%,#2c64e8)"><div class="a" style="left:4px;top:4px;width:11px;height:10px;border:1px solid #fff;border-top-width:3px"></div></div>
 <div class="db" style="left:776px;background:linear-gradient(135deg,#f0a080,#d84a22 50%,#c03a14)"><svg class="a" style="left:3px;top:3px" width="13" height="13" viewBox="0 0 13 13"><path d="M2,2 L11,11 M11,2 L2,11" stroke="#fff" stroke-width="2.1"/></svg></div>
</div>
<div class="t" style="left:571px;top:129px">Síla:</div>
<div class="a" style="left:610px;top:125px;width:1px;height:3px;background:#918f82"></div>
<div class="a" style="left:647px;top:125px;width:1px;height:3px;background:#918f82"></div>
<div class="a" style="left:685px;top:125px;width:1px;height:3px;background:#918f82"></div>
<div class="a" style="left:722px;top:125px;width:1px;height:3px;background:#918f82"></div>
<div class="a" style="left:759px;top:125px;width:1px;height:3px;background:#918f82"></div>
<div class="a" style="left:605px;top:139px;width:160px;height:4px;border-radius:2px;background:linear-gradient(#9b9a92 0,#9b9a92 1px,#f1f0e8 1px,#f1f0e8 3px,#fff 3px);border-left:1px solid #b5b3a8"></div>
<svg class="a" style="left:680px;top:129px" width="12" height="19" viewBox="0 0 12 19">
 <path d="M0.5,6.5 L5.5,1.2 L10.5,6.5 L10.5,17.5 L0.5,17.5Z" fill="#f3f3ef" stroke="#b9bbb4" stroke-width="1"/>
 <path d="M10.5,6.8 V17" stroke="#8e908a" stroke-width="1"/>
 <path d="M1,6 L5.5,1.4 L10,6" stroke="#3fb24a" stroke-width="1.6" fill="none"/>
 <path d="M1,17.5 H10" stroke="#3fb24a" stroke-width="1.4"/>
 <path d="M9.5,7 V16.5" stroke="#c8c8c0" stroke-width="1"/>
</svg>
<div class="t" style="left:604px;top:148px">Malá</div>
<div class="t" style="left:739px;top:148px">Velká</div>
<svg class="th" style="left:285px;top:195px" width="137" height="102" viewBox="0 0 137 102"><use href="#forest" width="137" height="102" filter="url(#f-svet)"/><rect width="137" height="102" fill="url(#gT-svet)"/></svg>
<div class="lbl" style="left:285px;top:300px">Světlejší</div>
<svg class="th" style="left:528px;top:195px" width="137" height="102" viewBox="0 0 137 102"><use href="#forest" width="137" height="102" filter="url(#f-cerv)"/><rect width="137" height="102" fill="url(#gT-cerv)"/></svg>
<div class="lbl" style="left:528px;top:300px">Červenější</div>
<svg class="th" style="left:677px;top:195px" width="137" height="102" viewBox="0 0 137 102"><use href="#forest" width="137" height="102" filter="url(#f-zlut)"/><rect width="137" height="102" fill="url(#gT-zlut)"/></svg>
<div class="lbl" style="left:677px;top:300px">Žlutější</div>
<svg class="th" style="left:116px;top:335px" width="137" height="102" viewBox="0 0 137 102"><use href="#forest" width="137" height="102" filter="url(#f-orig)"/><rect width="137" height="102" fill="url(#gT-orig)"/></svg>
<div class="lbl" style="left:116px;top:440px">Originální</div>
<svg class="th" style="left:285px;top:335px" width="137" height="102" viewBox="0 0 137 102"><use href="#forest" width="137" height="102" filter="url(#f-akt)"/><rect width="137" height="102" fill="url(#gT-akt)"/></svg>
<div class="lbl" style="left:285px;top:440px">Aktuální</div>
<svg class="th" style="left:454px;top:335px" width="137" height="102" viewBox="0 0 137 102"><use href="#forest" width="137" height="102" filter="url(#f-purp)"/><rect width="137" height="102" fill="url(#gT-purp)"/></svg>
<div class="lbl" style="left:454px;top:440px">Purpurovější</div>
<svg class="th" style="left:603px;top:335px" width="137" height="102" viewBox="0 0 137 102"><use href="#forest" width="137" height="102" filter="url(#f-akt)"/><rect width="137" height="102" fill="url(#gT-akt)"/></svg>
<div class="lbl" style="left:603px;top:440px">Aktuální</div>
<svg class="th" style="left:752px;top:335px" width="137" height="102" viewBox="0 0 137 102"><use href="#forest" width="137" height="102" filter="url(#f-zel)"/><rect width="137" height="102" fill="url(#gT-zel)"/></svg>
<div class="lbl" style="left:752px;top:440px">Zelenější</div>
<svg class="th" style="left:285px;top:475px" width="137" height="102" viewBox="0 0 137 102"><use href="#forest" width="137" height="102" filter="url(#f-tmav)"/><rect width="137" height="102" fill="url(#gT-tmav)"/></svg>
<div class="lbl" style="left:285px;top:580px">Tmavší</div>
<svg class="th" style="left:528px;top:476px" width="137" height="102" viewBox="0 0 137 102"><use href="#forest" width="137" height="102" filter="url(#f-modr)"/><rect width="137" height="102" fill="url(#gT-modr)"/></svg>
<div class="lbl" style="left:528px;top:581px">Modřejší</div>
<svg class="th" style="left:677px;top:476px" width="137" height="102" viewBox="0 0 137 102"><use href="#forest" width="137" height="102" filter="url(#f-azur)"/><rect width="137" height="102" fill="url(#gT-azur)"/></svg>
<div class="lbl" style="left:677px;top:581px">Azurovější</div>
<div class="btn" style="left:417px;box-shadow:inset 0 0 0 1px #cfdcf8,inset 0 0 0 2px #a9c0f0">OK</div>
<div class="btn" style="left:516px">Storno</div>
<svg class="a" style="left:888px;top:636px" width="12" height="12" viewBox="0 0 12 12"><g fill="#b8b4a2">
<rect x="9" y="1" width="2" height="2"/><rect x="5" y="5" width="2" height="2"/><rect x="9" y="5" width="2" height="2"/>
<rect x="1" y="9" width="2" height="2"/><rect x="5" y="9" width="2" height="2"/><rect x="9" y="9" width="2" height="2"/></g></svg>

</div>
</body></html>
